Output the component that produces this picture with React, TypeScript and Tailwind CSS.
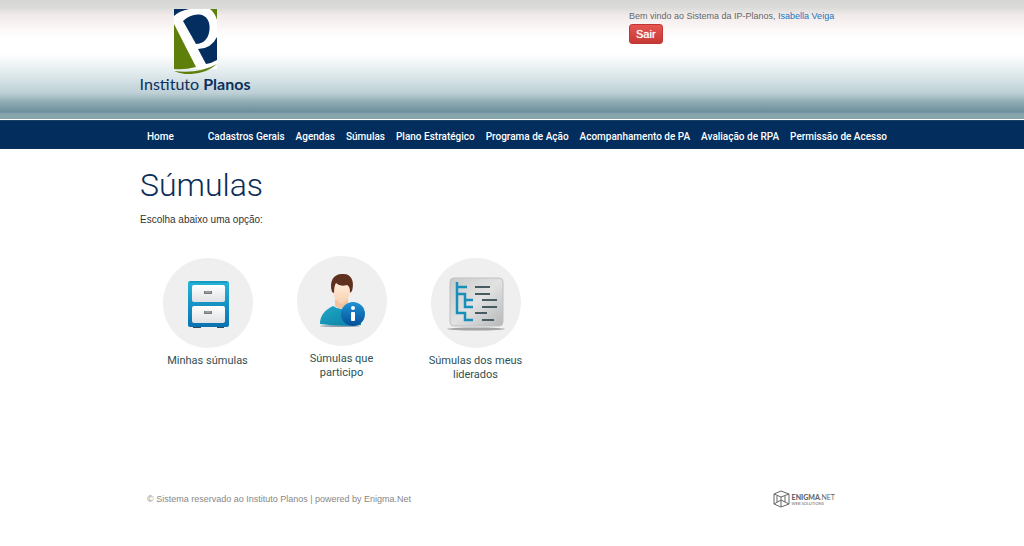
const menu = [
  'Cadastros Gerais',
  'Agendas',
  'Súmulas',
  'Plano Estratégico',
  'Programa de Ação',
  'Acompanhamento de PA',
  'Avaliação de RPA',
  'Permissão de Acesso'
]

function Logo() {
  return (
    <a href="#" className="flex w-[110px] flex-col items-center whitespace-nowrap text-[#0b3060]">
      <svg viewBox="0 0 43 65" className="h-[65px] w-[43px]" aria-hidden="true">
        <rect width="43" height="60" fill="#fff" />
        <path d="M0 0H15Q5 2 0 7Z" fill="#052e60" />
        <path d="M36 0H43V11Q41 4 36 0Z" fill="#5f7f0b" />
        <path d="M0 15L22 58Q11 61 0 60Z" fill="#5f7f0b" />
        <path d="M9 12C15 6 24 4 30 7C36 10 37 20 34 27C32 32 27 35 22 35Z" fill="#052e60" />
        <path d="M24 40Q37 40 43 28V51Q38 54 32 55Z" fill="#052e60" />
        <path d="M0 62Q25 65 43 55Q31 66 11 65Q4 64 0 62Z" fill="#5f7f0b" />
      </svg>
      <span className="font-['Lato',sans-serif] text-[16px] leading-[20px]">
        Instituto <b>Planos</b>
      </span>
    </a>
  )
}

function CabinetIcon() {
  return (
    <svg viewBox="0 0 90 90" className="h-[90px] w-[90px]" aria-hidden="true">
      <defs>
        <linearGradient id="cabinet" x1="0" y1="0" x2="0" y2="1">
          <stop offset="0" stopColor="#25b5d8" />
          <stop offset="1" stopColor="#0872b0" />
        </linearGradient>
        <linearGradient id="drawer" x1="0" y1="0" x2="0" y2="1">
          <stop offset="0" stopColor="#fff" />
          <stop offset="1" stopColor="#dfe1e3" />
        </linearGradient>
      </defs>
      <circle cx="45" cy="45" r="45" fill="#efefef" />
      <path d="M30 68H38V70H30ZM54 68H61V70H54Z" fill="#334b59" />
      <rect x="25" y="23" width="41" height="46" rx="2" fill="url(#cabinet)" />
      <path d="M27 24H64" stroke="#0b84aa" />
      <rect x="29" y="27" width="33" height="17" rx="2" fill="url(#drawer)" />
      <rect x="29" y="48" width="33" height="17" rx="2" fill="url(#drawer)" />
      <path d="M41 33H49V36H41ZM41 53H49V56H41Z" fill="#777b80" />
      <path d="M42 34H48M42 54H48" stroke="#b5b8bb" />
    </svg>
  )
}

function PersonIcon() {
  return (
    <svg viewBox="0 0 90 90" className="h-[90px] w-[90px]" aria-hidden="true">
      <defs>
        <linearGradient id="shirt" x1="0" y1="0" x2="1" y2="1">
          <stop offset="0" stopColor="#22a9c6" />
          <stop offset="1" stopColor="#087da4" />
        </linearGradient>
        <linearGradient id="info" x1="0" y1="0" x2="0" y2="1">
          <stop offset="0" stopColor="#1f94d5" />
          <stop offset="1" stopColor="#034e98" />
        </linearGradient>
        <linearGradient id="skin" x1="0" y1="0" x2="0" y2="1">
          <stop offset="0" stopColor="#fff0e2" />
          <stop offset="1" stopColor="#f8cfae" />
        </linearGradient>
      </defs>
      <circle cx="45" cy="45" r="45" fill="#efefef" />
      <ellipse cx="43" cy="70" rx="20" ry="1" fill="#8fa0ac" />
      <path d="M23 68C23 59 28 54 36 50Q45 56 53 50C60 53 64 60 64 69Q43 71 23 68Z" fill="url(#shirt)" />
      <path d="M38 43H51V50Q45 55 38 50Z" fill="#f2c29f" />
      <path d="M36 27Q44 21 53 27V37Q51 46 45 48Q38 46 36 37Z" fill="url(#skin)" />
      <path d="M35 36C32 26 36 18 45 18C54 17 58 25 55 35L53 37C53 32 52 30 50 29Q43 31 39 27Q37 30 37 37Z" fill="#60301e" />
      <circle cx="56" cy="58" r="12" fill="url(#info)" />
      <circle cx="56" cy="52" r="2" fill="#fff" />
      <rect x="54" y="56" width="4" height="9" rx="1" fill="#fff" />
    </svg>
  )
}

function TreeIcon() {
  return (
    <svg viewBox="0 0 90 90" className="h-[90px] w-[90px]" aria-hidden="true">
      <defs>
        <linearGradient id="board" x1="0" y1="0" x2="1" y2="1">
          <stop offset="0" stopColor="#c9cacb" />
          <stop offset=".5" stopColor="#e2e2e3" />
          <stop offset="1" stopColor="#b6b7b9" />
        </linearGradient>
      </defs>
      <circle cx="45" cy="45" r="45" fill="#efefef" />
      <ellipse cx="45" cy="71" rx="29" ry="1.5" fill="#a2a4a6" />
      <rect x="19" y="20" width="53" height="48" rx="4" fill="url(#board)" stroke="#bfc0c1" />
      <path d="M26 24V55H34V62H42M26 29H36M26 36H34V49H42M34 42H42" fill="none" stroke="#178fb8" strokeWidth="2.5" />
      <path d="M44 29H59M44 36H59M51 42H66M51 49H66M44 55H56M51 62H63" stroke="#465c60" strokeWidth="2" />
    </svg>
  )
}

const options = [
  { title: 'Minhas súmulas', icon: <CabinetIcon />, className: 'pt-[2px]' },
  { title: 'Súmulas que participo', icon: <PersonIcon />, className: '' },
  { title: 'Súmulas dos meus liderados', icon: <TreeIcon />, className: 'pt-[2px]' }
]

export default function App() {
  return (
    <div className="bg-white font-['Liberation_Sans',Arial,sans-serif] text-[#333]">
      {/* Header */}
      <header className="border-b border-white bg-[linear-gradient(to_bottom,#d4d7d5_0px,#dcdcda_8px,#f0eae9_15px,#fdf9f8_30px,#fff_38px,#fff_54px,#dce7ea_76px,#bdd0d5_93px,#8eabb3_102px,#7295a1_110px,#708fa0_112px,#86a6ad_114px,#84a5aa_119px)]">
        <div className="mx-auto flex h-[119px] max-w-[744px] items-start justify-between pt-[9px]">
          <Logo />
          <div className="w-[255px]">
            <p className="text-[9px] leading-[15px] whitespace-nowrap text-[#666]">
              Bem vindo ao Sistema da IP-Planos,{' '}
              <a href="#" className="text-[#1c75bc]">Isabella Veiga</a>
            </p>
            <button
              type="button"
              className="block h-5 rounded-[3px] border border-[#c13632] bg-linear-to-b from-[#e65552] to-[#c63833] px-[6px] text-[11px] leading-[18px] text-white [text-shadow:0_0_1px_#fff]"
            >
              Sair
            </button>
          </div>
        </div>
      </header>

      {/* Menu */}
      <nav className="border-t border-[#1b4068] bg-[#032d5c]">
        <div className="mx-auto flex h-7 max-w-[744px] items-center gap-[11px] pt-[3px] pl-[7px] font-['Roboto',sans-serif] text-[10px] font-medium whitespace-nowrap text-white">
          <a href="#" className="mr-[23px]">Home</a>
          {menu.map((item) => (
            <a key={item} href="#">{item}</a>
          ))}
        </div>
      </nav>

      {/* Content */}
      <main className="mx-auto max-w-[744px] pt-4">
        <h1 className="font-['Roboto',sans-serif] text-[32px] leading-[40px] font-light text-[#0b2d58]">Súmulas</h1>
        <p className="mt-2 text-[10px] leading-[14px]">Escolha abaixo uma opção:</p>

        <div className="mt-[29px] ml-[7px] flex h-[220px] items-start gap-[13px]">
          {options.map((option) => (
            <a
              key={option.title}
              href="#"
              className={`flex w-[121px] flex-col items-center text-center font-['Roboto',sans-serif] text-[11px] leading-[14px] text-[#2e5154] ${option.className}`}
            >
              {option.icon}
              <span className="mt-[6px] px-3">{option.title}</span>
            </a>
          ))}
        </div>
      </main>

      {/* Footer */}
      <footer className="mx-auto flex max-w-[744px] items-center justify-between pt-[14px] pr-[49px] pb-9 pl-[7px]">
        <p className="text-[9px] leading-[12px] text-[#888]">
          © Sistema reservado ao Instituto Planos | powered by Enigma.Net
        </p>
        <a href="#" className="flex items-center gap-[2px] text-[#666]">
          <svg viewBox="0 0 17 18" className="h-[18px] w-[17px]" fill="none" stroke="currentColor" aria-hidden="true">
            <path d="M1 4L8 1L16 4V14L8 17L1 14ZM1 4L8 7L16 4M8 7V17M1 14L8 10L16 14M4 6V12M12 6V12" />
          </svg>
          <span className="flex flex-col font-['Lato',sans-serif] whitespace-nowrap">
            <span className="text-[7px] leading-[8px]"><b className="font-black">ENIGMA</b>.NET</span>
            <span className="text-[4px] leading-[5px]">WEB SOLUTIONS</span>
          </span>
        </a>
      </footer>
    </div>
  )
}
